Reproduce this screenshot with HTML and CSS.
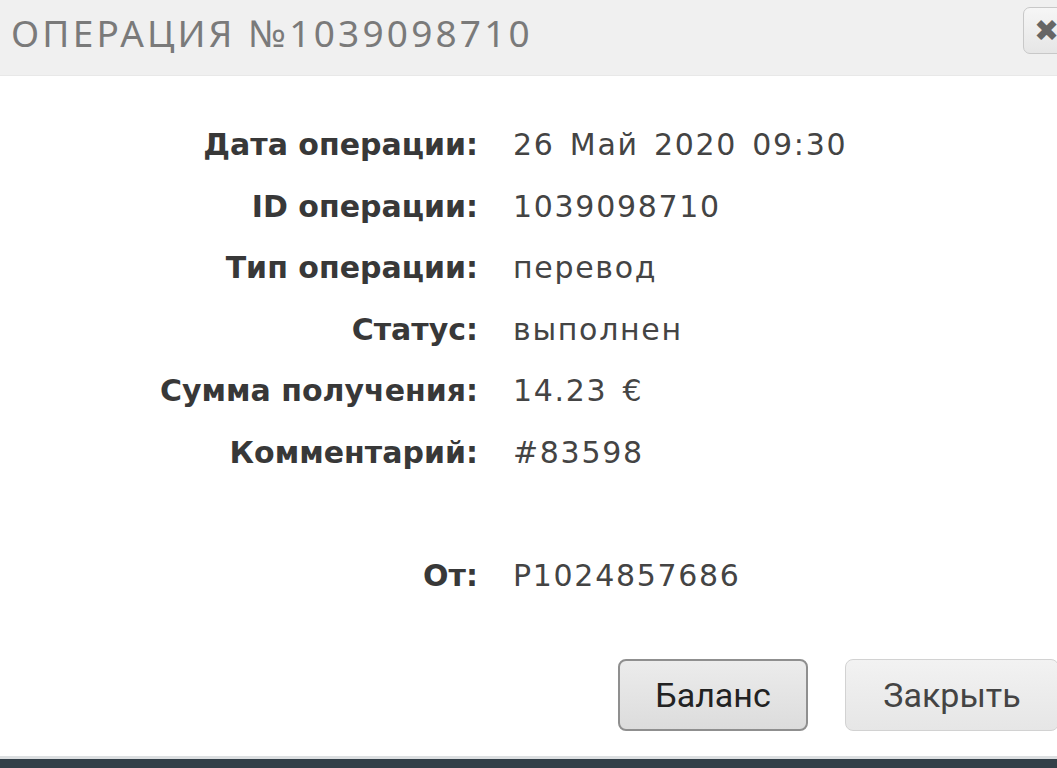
FILE: index.html
```html
<!DOCTYPE html>
<html lang="ru">
<head>
  <meta charset="UTF-8">
  <meta name="viewport" content="width=device-width, initial-scale=1.0">
  <title>Операция №1039098710</title>
  <link rel="stylesheet" href="styles.css">
</head>
<body>
  <div class="dialog">
    <header class="dialog-head">
      <h1>ОПЕРАЦИЯ №1039098710</h1>
      <button class="close-x" type="button">✖</button>
    </header>

    <div class="details">
      <div class="label">Дата операции:</div><div class="value">26 Май 2020 09:30</div>
      <div class="label">ID операции:</div><div class="value">1039098710</div>
      <div class="label">Тип операции:</div><div class="value">перевод</div>
      <div class="label">Статус:</div><div class="value">выполнен</div>
      <div class="label">Сумма получения:</div><div class="value">14.23 €</div>
      <div class="label">Комментарий:</div><div class="value">#83598</div>
      <div class="spacer"></div>
      <div class="label">От:</div><div class="value">P1024857686</div>
    </div>

    <div class="actions">
      <button class="btn btn-main" type="button">Баланс</button>
      <button class="btn" type="button">Закрыть</button>
    </div>
  </div>
  <div class="bottom-bar"></div>
</body>
</html>
```

FILE: styles.css
```css
html, body {
  margin: 0;
  height: 100%;
  overflow: hidden;
  background: #fff;
}
body {
  font-family: 'DejaVu Sans', sans-serif;
  display: flex;
  flex-direction: column;
}
.dialog {
  flex: 1;
  width: 1075px;
  display: flex;
  flex-direction: column;
}
.dialog-head {
  height: 76px;
  background: #f0f0f0;
  border-bottom: 1px solid #e8e8e8;
  display: flex;
  align-items: flex-start;
  justify-content: space-between;
  box-sizing: border-box;
}
.dialog-head h1 {
  margin: 0;
  padding: 7px 0 0 11px;
  font-family: 'Noto Sans', sans-serif;
  font-weight: 400;
  font-size: 37px;
  letter-spacing: 3.2px;
  color: #7a7a7a;
}
.close-x {
  margin-top: 7px;
  width: 52px;
  height: 47px;
  border: 1px solid #c8c8c8;
  border-radius: 7px;
  background: linear-gradient(#f6f6f6, #e6e6e6);
  color: #666;
  font-size: 30px;
  line-height: 1;
  padding: 0 0 0 10px;
  text-align: left;
}
.details {
  display: grid;
  grid-template-columns: 478px 1fr;
  column-gap: 35px;
  grid-auto-rows: 61.5px;
  padding-top: 38px;
  font-size: 30px;
  line-height: 61.5px;
}
.label {
  text-align: right;
  font-weight: 700;
  color: #383838;
}
.value {
  color: #444;
  font-weight: 400;
  letter-spacing: 1.7px;
  word-spacing: 4px;
}
.spacer {
  grid-column: 1 / 3;
}
.actions {
  display: flex;
  justify-content: flex-end;
  gap: 37px;
  margin-top: auto;
  padding-bottom: 25px;
  padding-right: 16px;
}
.btn {
  height: 72px;
  width: 214px;
  border: 1px solid #d2d2d2;
  border-radius: 8px;
  background: linear-gradient(#f2f2f2, #e6e6e6);
  font-family: Roboto, sans-serif;
  font-size: 34px;
  color: #444;
}
.btn-main {
  width: 190px;
  border: 2px solid #8f8f8f;
  background: linear-gradient(#ececec, #dcdcdc);
  color: #222;
}
.bottom-bar {
  flex-shrink: 0;
  height: 9px;
  border-top: 3px solid #dcdfe1;
  background: #333f48;
}
```
